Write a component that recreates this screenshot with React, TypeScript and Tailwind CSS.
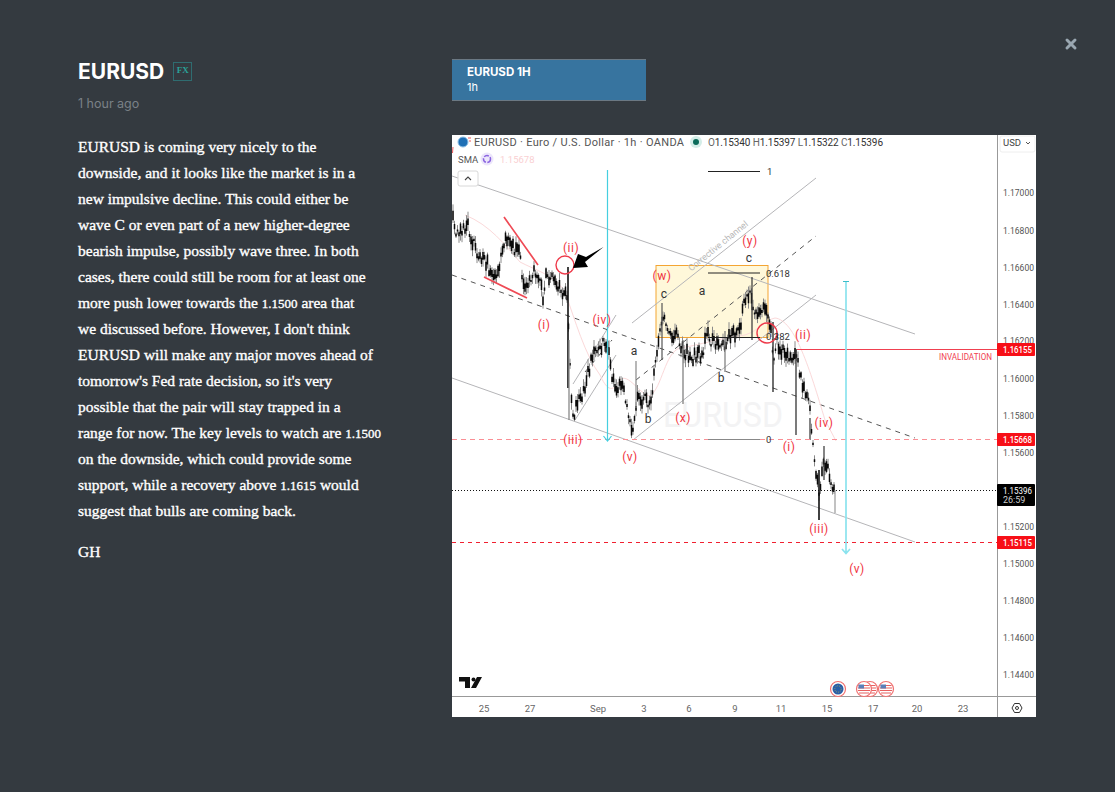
import React from "react";
import { X } from "lucide-react";

const lines = [
  "EURUSD is coming very nicely to the",
  "downside, and it looks like the market is in a",
  "new impulsive decline. This could either be",
  "wave C or even part of a new higher-degree",
  "bearish impulse, possibly wave three. In both",
  "cases, there could still be room for at least one",
  "more push lower towards the 1.1500 area that",
  "we discussed before. However, I don't think",
  "EURUSD will make any major moves ahead of",
  "tomorrow's Fed rate decision, so it's very",
  "possible that the pair will stay trapped in a",
  "range for now. The key levels to watch are 1.1500",
  "on the downside, which could provide some",
  "support, while a recovery above 1.1615 would",
  "suggest that bulls are coming back.",
];

const way: [number, number][] = [
  [453, 222], [457, 236], [463, 232], [468, 226], [472, 238], [476, 252], [481, 264], [486, 260], [491, 272], [495, 280],
  [500, 262], [505, 242], [510, 240], [514, 250], [518, 245], [522, 272], [524, 292], [529, 276], [534, 272], [540, 276],
  [543, 300], [546, 276], [551, 278], [556, 284], [562, 294], [567, 296], [569, 340], [571, 400], [573, 414], [577, 408],
  [581, 396], [585, 388], [590, 366], [595, 346], [601, 345], [606, 342], [610, 362], [614, 385], [619, 388], [624, 392],
  [628, 416], [632, 434], [635, 418], [638, 392], [643, 400], [648, 402], [652, 392], [656, 364], [659, 340], [662, 318],
  [666, 326], [672, 332], [678, 338], [684, 350], [690, 356], [696, 358], [702, 352], [708, 337], [713, 340], [718, 348],
  [722, 350], [726, 340], [731, 336], [736, 330], [741, 322], [746, 296], [750, 290], [754, 318], [758, 312], [764, 308],
  [768, 316], [771, 332], [774, 360], [777, 340], [782, 352], [788, 356], [793, 362], [797, 356], [801, 378], [806, 392],
  [810, 412], [813, 440], [816, 472], [819, 498], [821, 490], [823, 460], [826, 462], [829, 472], [832, 490], [835, 497],
];

let seed = 29;
const rnd = () => {
  seed = (seed * 16807) % 2147483647;
  return seed / 2147483647;
};

const interp = (x: number) => {
  for (let i = 0; i < way.length - 1; i++) {
    if (x >= way[i][0] && x <= way[i + 1][0]) {
      const t = (x - way[i][0]) / (way[i + 1][0] - way[i][0] || 1);
      return way[i][1] + t * (way[i + 1][1] - way[i][1]);
    }
  }
  return way[way.length - 1][1];
};

let bodies = "";
let wicks = "";
for (let x = 453; x <= 835; x += 1.5) {
  const y = interp(x) + (rnd() - 0.5) * 13;
  const h = 1 + rnd() * 4.5;
  const w1 = 1 + rnd() * 6;
  const w2 = 1 + rnd() * 6;
  bodies += `M${x.toFixed(1)} ${(y - h).toFixed(1)}V${(y + h).toFixed(1)}`;
  wicks += `M${x.toFixed(1)} ${(y - h - w1).toFixed(1)}V${(y + h + w2).toFixed(1)}`;
}

const spikes: [number, number, number, string, number][] = [
  [568, 267, 388, "#111", 1.6],
  [569, 340, 420, "#888", 1.3],
  [636, 361, 408, "#888", 1.2],
  [683, 340, 404, "#777", 1.2],
  [725, 331, 372, "#777", 1.2],
  [773, 322, 392, "#222", 1.3],
  [796, 349, 435, "#222", 1.2],
  [810, 418, 440, "#333", 1.2],
  [819, 470, 520, "#111", 1.6],
  [824, 446, 480, "#333", 1.2],
  [835, 490, 513, "#999", 1.2],
  [662, 303, 360, "#555", 1.2],
  [752, 277, 340, "#333", 1.2],
];

const redLabels: [string, number, number][] = [
  ["(ii)", 571, 252], ["(i)", 544, 329], ["(iv)", 602, 324], ["(iii)", 573, 444], ["(v)", 630, 461], ["(w)", 662, 280],
  ["(y)", 750, 245], ["(x)", 683, 422], ["(ii)", 803, 339], ["(i)", 789, 451], ["(iv)", 824, 427], ["(iii)", 819, 533], ["(v)", 857, 573],
];
const blackLabels: [string, number, number][] = [
  ["a", 634, 355], ["b", 648, 423], ["c", 664, 298], ["a", 702, 295], ["b", 721, 382], ["c", 749, 262],
];
const prices: [string, number][] = [
  ["1.17000", 192], ["1.16800", 230], ["1.16600", 267], ["1.16400", 304], ["1.16200", 340], ["1.16000", 378], ["1.15800", 415],
  ["1.15600", 452], ["1.15200", 526], ["1.15000", 563], ["1.14800", 600], ["1.14600", 637], ["1.14400", 674],
];
const dates: [string, number][] = [
  ["25", 484], ["27", 530], ["Sep", 598], ["3", 644], ["6", 689], ["9", 735], ["11", 781], ["15", 827], ["17", 873], ["20", 917], ["23", 963],
];
const tags: [string, number][] = [["1.16155", 343], ["1.15668", 433], ["1.15115", 536]];

function UsFlag({ x }: { x: number }) {
  return (
    <g>
      <circle cx={x} cy={689} r={7.5} fill="#fff" stroke="#f07070" strokeWidth={1.2} />
      <path d={`M${x - 5.5} 685.5h11M${x - 6} 688h12M${x - 6} 690.5h12M${x - 5} 693h10`} stroke="#e86060" strokeWidth={1.2} />
      <rect x={x - 5.5} y={684.5} width={5.5} height={4} fill="#5a7fb8" />
    </g>
  );
}

function Chart() {
  const font = "Roboto, 'Liberation Sans', sans-serif";
  return (
    <svg viewBox="452 135 584 582" width={584} height={582} className="block bg-white" fontFamily={font}>
      <text x={723} y={427} textAnchor="middle" fontSize={35} fill="#f3f3f4" textLength={120} lengthAdjust="spacingAndGlyphs">EURUSD</text>
      <rect x={656} y={265.5} width={112} height={72} fill="#fff8da" stroke="#f4a533" strokeWidth={1} />

      <path d="M452 176L915 334M452 378L915 542" stroke="#b5b5b8" strokeWidth={1} fill="none" />
      <path d="M632 323L816 178M633 440L816 295M573 384L616 315M575 420L616 355" stroke="#b5b5b8" strokeWidth={1} fill="none" />
      <path d="M452 275L915 438M636 380L816 236M585 372L612 340" stroke="#555" strokeWidth={1} strokeDasharray="5 5" fill="none" />
      <path
        d="M465 215C490 225 505 245 520 262C535 270 555 275 565 292C575 320 585 355 600 375C606 388 612 395 620 380C628 372 640 395 650 396C662 388 665 352 680 348C700 345 720 338 745 335C760 330 765 320 775 318C795 320 810 370 825 420L836 441"
        stroke="#fbd9da"
        strokeWidth={1}
        fill="none"
      />

      <path d={wicks} stroke="#8a8a8a" strokeWidth={1} fill="none" />
      <path d={bodies} stroke="#0a0a0a" strokeWidth={1.5} fill="none" />
      {spikes.map(([x, a, b, c, w], i) => (
        <line key={i} x1={x} x2={x} y1={a} y2={b} stroke={c} strokeWidth={w} />
      ))}

      <path d="M504 217L538 265M484 277L527 298" stroke="#ef4a55" strokeWidth={1.7} fill="none" />
      <circle cx={565} cy={265} r={9} fill="none" stroke="#ee3b4b" strokeWidth={1.4} />
      <circle cx={767} cy={333} r={10} fill="none" stroke="#ee3b4b" strokeWidth={1.4} />
      <path d="M603.5 247L586 257L578 254L573 268L588 267L585 262Z" fill="#000" />

      <line x1={708} x2={760} y1={439.5} y2={439.5} stroke="#888" strokeWidth={1} />
      <line x1={452} x2={708} y1={439.5} y2={439.5} stroke="#fa8f95" strokeWidth={1} strokeDasharray="5 4" />
      <line x1={760} x2={997} y1={439.5} y2={439.5} stroke="#fa8f95" strokeWidth={1} strokeDasharray="5 4" />
      <line x1={452} x2={997} y1={542.5} y2={542.5} stroke="#f02030" strokeWidth={1} strokeDasharray="4 4" />
      <line x1={452} x2={997} y1={490.5} y2={490.5} stroke="#111" strokeWidth={1} strokeDasharray="1 2" />
      <line x1={797} x2={997} y1={349.5} y2={349.5} stroke="#f04050" strokeWidth={1} />

      <path d="M708 171.5H760M708 273H760M708 337.5H760" stroke="#222" strokeWidth={1} fill="none" />
      <g fontSize={9.5} fill="#333">
        <text x={767} y={175}>1</text>
        <text x={766} y={277}>0.618</text>
        <text x={766} y={340}>0.382</text>
        <text x={766} y={443}>0</text>
      </g>

      <path d="M607.5 170V440M603.5 436L607.5 441L611.5 436" stroke="#45cfe0" strokeWidth={1.2} fill="none" />
      <path d="M846 281V553M842 549L846 553.5L850 549" stroke="#8be3ee" strokeWidth={1.7} fill="none" />
      <path d="M843 281.5H849" stroke="#3bbcc9" strokeWidth={1} />

      <g fontSize={12} fill="#f03442" textAnchor="middle" letterSpacing={0.5}>
        {redLabels.map(([t, x, y], i) => (
          <text key={i} x={x} y={y}>{t}</text>
        ))}
      </g>
      <g fontSize={12} fill="#333" textAnchor="middle">
        {blackLabels.map(([t, x, y], i) => (
          <text key={i} x={x} y={y}>{t}</text>
        ))}
      </g>
      <text x={718} y={249} fontSize={9} fill="#b8b8b8" textAnchor="middle" textLength={74} transform="rotate(-39 718 246)">Corrective channel</text>
      <text x={939} y={360} fontSize={8.5} fill="#f04050" textLength={53} lengthAdjust="spacingAndGlyphs">INVALIDATION</text>

      <rect x={452} y={135} width={520} height={15} fill="#fff" fillOpacity={0.85} />
      <circle cx={463} cy={142} r={5} fill="#1f6fb5" stroke="#8fc0e6" strokeWidth={1} />
      <path d="M468 138h3M469 141h2" stroke="#ef5a5a" strokeWidth={1} />
      <path d="M453 147l-0.5 6" stroke="#ef5a5a" strokeWidth={1} />
      <text x={474} y={146} fontSize={11} fill="#555" textLength={210} lengthAdjust="spacing">EURUSD · Euro / U.S. Dollar · 1h · OANDA</text>
      <circle cx={696} cy={142} r={6} fill="#d4ede8" />
      <circle cx={696} cy={142} r={3} fill="#0b6b5a" />
      <text x={708} y={146} fontSize={10} fill="#333" textLength={175} lengthAdjust="spacing">
        <tspan fill="#666">O</tspan>1.15340 <tspan fill="#666">H</tspan>1.15397 <tspan fill="#666">L</tspan>1.15322 <tspan fill="#666">C</tspan>1.15396
      </text>

      <text x={458} y={163} fontSize={9.5} fill="#555">SMA</text>
      <circle cx={487} cy={159} r={6.5} fill="#ece6fb" />
      <circle cx={487} cy={159} r={3.5} fill="none" stroke="#8a63e0" strokeWidth={1.5} strokeDasharray="5 1.5" />
      <text x={500} y={163} fontSize={9.5} fill="#fad0d2">1.15678</text>
      <rect x={458} y={171} width={20} height={15} rx={2} fill="#fff" stroke="#d8d8d8" />
      <path d="M465 180l3-3 3 3" stroke="#444" strokeWidth={1.1} fill="none" />

      <rect x={997} y={135} width={39} height={582} fill="#fff" />
      <rect x={452} y={697} width={584} height={20} fill="#fff" />
      <line x1={997.5} x2={997.5} y1={135} y2={717} stroke="#999" strokeWidth={1} />
      <line x1={452} x2={1036} y1={696.5} y2={696.5} stroke="#999" strokeWidth={1} />
      <rect x={1000} y={136} width={35} height={16} fill="#fff" stroke="#eee" rx={2} />
      <text x={1003} y={146} fontSize={9.5} fill="#444">USD</text>
      <path d="M1026 142l2 2 2-2" stroke="#555" strokeWidth={1} fill="none" />

      <g fontSize={9} fill="#555">
        {prices.map(([t, y]) => (
          <text key={t} x={1003} y={y + 3.5} textLength={31} lengthAdjust="spacingAndGlyphs">{t}</text>
        ))}
      </g>
      {tags.map(([t, y]) => (
        <g key={t}>
          <rect x={997} y={y} width={38} height={13} rx={1} fill="#f70f17" />
          <text x={1003} y={y + 10} fontSize={9} fill="#fff" fontWeight={500} textLength={29} lengthAdjust="spacingAndGlyphs">{t}</text>
        </g>
      ))}
      <rect x={997} y={484} width={38} height={22} rx={1} fill="#000" />
      <text x={1003} y={494} fontSize={9} fill="#fff" textLength={29} lengthAdjust="spacingAndGlyphs">1.15396</text>
      <text x={1003} y={503} fontSize={9} fill="#ccc">26:59</text>

      <g fontSize={9.5} fill="#666" textAnchor="middle">
        {dates.map(([t, x]) => (
          <text key={t} x={x} y={712}>{t}</text>
        ))}
      </g>
      <path d="M1012 708l2.5-4.5h5l2.5 4.5-2.5 4.5h-5z" fill="none" stroke="#333" strokeWidth={1} />
      <circle cx={1017} cy={708} r={1.5} fill="none" stroke="#333" strokeWidth={1} />

      <path d="M459 677H470V688H465V681.5H459ZM477 677H482L476 688H471Z" fill="#111" />
      <circle cx={473.5} cy={679.5} r={2} fill="#111" />

      <circle cx={838} cy={689} r={7.5} fill="#fff" stroke="#f07070" strokeWidth={1.2} />
      <circle cx={838} cy={689} r={5.5} fill="#2a5fa8" />
      <circle cx={838} cy={689} r={3.2} fill="none" stroke="#c8b54a" strokeWidth={0.8} strokeDasharray="0.8 1.2" />
      <UsFlag x={870} />
      <UsFlag x={864} />
      <UsFlag x={886} />
    </svg>
  );
}

function BodyLine({ text }: { text: string }) {
  const parts = text.split(/(1\.\d+)/);
  return (
    <div className="h-[26px] whitespace-nowrap">
      {parts.map((p, i) =>
        i % 2 === 1 ? (
          <span key={i} className="text-[13px] leading-[0]">{p}</span>
        ) : (
          <span key={i}>{p}</span>
        ),
      )}
    </div>
  );
}

export default function App() {
  return (
    <div className="relative flex min-h-[792px] w-full bg-[#343a40] pl-[78px] pt-[59px] font-['Liberation_Serif',serif]">
      <button className="absolute left-[1063px] top-[36px] text-[#9aa7b1]">
        <X size={16} strokeWidth={4.5} />
      </button>

      <div className="w-[374px] shrink-0">
        <div className="flex h-[24px] items-center gap-[9px]">
          <h1 className="font-['Inter',sans-serif] text-[21px] font-bold leading-none text-white">EURUSD</h1>
          <span className="flex h-[19px] w-[19px] items-center justify-center border border-[#2f6c70] font-['Liberation_Serif',serif] text-[9px] font-bold text-[#2aa198]">
            FX
          </span>
        </div>
        <p className="mt-[12px] font-['Inter',sans-serif] text-[12.5px] leading-[18px] text-[#7a8187]">1 hour ago</p>
        <div className="mt-[21px] w-[310px] text-[15.5px] leading-[26px] text-white [-webkit-text-stroke:0.35px_white]">
          {lines.map((l) => (
            <BodyLine key={l} text={l} />
          ))}
          <p className="mt-[15px]">GH</p>
        </div>
      </div>

      <div className="w-[584px] shrink-0">
        <div className="flex h-[42px] w-[194px] flex-col justify-center border-y border-[#6b7883] bg-[#37749f] pl-[15px] font-['Inter',sans-serif] text-white">
          <div className="text-[11.5px] font-bold leading-[15px]">EURUSD 1H</div>
          <div className="text-[11px] leading-[15px]">1h</div>
        </div>
        <div className="mt-[34px]">
          <Chart />
        </div>
      </div>
    </div>
  );
}
